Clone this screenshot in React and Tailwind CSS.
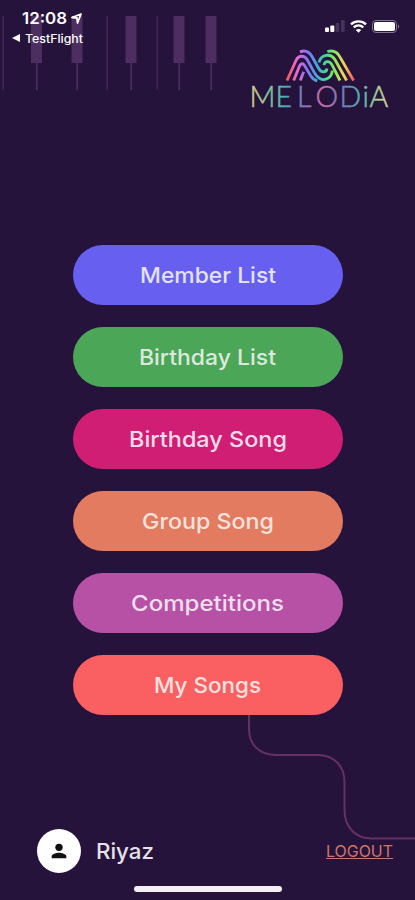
import React from 'react';

const menuItems = [
  { label: 'Member List', color: 'bg-[#665ff0]', text: 'text-[#e3e2f5]', width: 136 },
  { label: 'Birthday List', color: 'bg-[#4ba657]', text: 'text-[#dce8dc]', width: 137 },
  { label: 'Birthday Song', color: 'bg-[#d01e75]', text: 'text-[#f6dce8]', width: 158 },
  { label: 'Group Song', color: 'bg-[#e37b60]', text: 'text-[#f5e2dc]', width: 132 },
  { label: 'Competitions', color: 'bg-[#b651a5]', text: 'text-[#f0deed]', width: 153 },
  { label: 'My Songs', color: 'bg-[#fa6062]', text: 'text-[#fae0df]', width: 107 },
];

// Text set to a fixed advance width
const Label = ({ children, width, size, weight = 500 }) => (
  <svg width={width} height="34" className="block overflow-visible" fill="currentColor">
    <text
      x="0"
      y="25"
      fontFamily="Inter, sans-serif"
      fontSize={size}
      fontWeight={weight}
      textLength={width}
      lengthAdjust="spacingAndGlyphs"
    >
      {children}
    </text>
  </svg>
);

const PianoKeys = () => (
  <svg width="230" height="100" className="absolute top-0 left-0" aria-hidden="true">
    <g fill="#422557">
      {[3, 107, 157].map((x) => (
        <rect key={x} x={x - 0.5} y="16" width="1.5" height="74" />
      ))}
    </g>
    <g fill="#4c2f60">
      {[36.5, 77, 131, 179, 211].map((x) => (
        <g key={x}>
          <rect x={x - 5.5} y="16" width="11" height="47" />
          <rect x={x - 0.5} y="63" width="1.5" height="27" />
        </g>
      ))}
    </g>
  </svg>
);

const StatusBar = () => (
  <div className="relative flex justify-between h-12 pt-[9px] pl-[11px] pr-[15px] text-white">
    <div>
      <div className="flex items-center gap-1 pl-[11px] h-[18px]">
        <svg width="45" height="18" fill="white" className="overflow-visible">
          <text x="0" y="15" fontFamily="Inter, sans-serif" fontSize="16" fontWeight="600" textLength="45" lengthAdjust="spacingAndGlyphs">12:08</text>
        </svg>
        <svg width="11" height="11" viewBox="0 0 11 11" fill="none" stroke="white" strokeWidth="1.8" strokeLinejoin="round">
          <path d="M10 1 L1 4.500 L6 5 L6.500 10 Z" />
        </svg>
      </div>
      <div className="flex items-center gap-1 h-[22px]">
        <svg width="10" height="8" viewBox="0 0 10 8" fill="white">
          <path d="M1 4 L9 0 V8 Z" />
        </svg>
        <svg width="58" height="16" fill="white" className="overflow-visible">
          <text x="0" y="12.5" fontFamily="Inter, sans-serif" fontSize="11.5" fontWeight="500" textLength="58" lengthAdjust="spacingAndGlyphs">TestFlight</text>
        </svg>
      </div>
    </div>
    <div className="flex items-center gap-[5px] h-[34px]">
      <svg width="20" height="12" viewBox="0 0 20 12">
        <rect x="0" y="7.5" width="4" height="4.5" rx="1" fill="white" />
        <rect x="5.3" y="5.5" width="4" height="6.5" rx="1" fill="white" />
        <rect x="10.6" y="3" width="3.7" height="9" rx="1" fill="#46335b" />
        <rect x="16" y="0" width="3.7" height="12" rx="1" fill="#46335b" />
      </svg>
      <svg width="17" height="13" viewBox="0 0 17 13" fill="none" stroke="white" strokeWidth="2.3">
        <path d="M1 4.4 C5.2 0.4 11.8 0.4 16 4.4" />
        <path d="M3.7 7.4 C6.5 4.8 10.5 4.8 13.3 7.4" />
        <path d="M8.5 12.8 L5.8 10 C7.3 8.7 9.7 8.7 11.2 10 Z" fill="white" stroke="none" />
      </svg>
      <svg width="28" height="13" viewBox="0 0 28 13">
        <rect x="0.5" y="0.5" width="24" height="12" rx="3.5" fill="none" stroke="#81768f" />
        <rect x="2" y="2" width="21" height="9" rx="2" fill="white" />
        <path d="M26 4.5 C27.6 5.2 27.6 7.8 26 8.5 Z" fill="#81768f" />
      </svg>
    </div>
  </div>
);

const Logo = () => (
  <svg width="142" height="62" viewBox="250 48 142 62" className="block overflow-visible" aria-label="Melodia">
    <defs>
      <linearGradient id="mark" gradientUnits="userSpaceOnUse" x1="140" y1="0" x2="341" y2="0">
        <stop offset="0" stopColor="#f2595c" />
        <stop offset="0.15" stopColor="#e86bd0" />
        <stop offset="0.3" stopColor="#8c70f0" />
        <stop offset="0.45" stopColor="#43a6df" />
        <stop offset="0.6" stopColor="#43e08a" />
        <stop offset="0.74" stopColor="#9be756" />
        <stop offset="0.86" stopColor="#f4d557" />
        <stop offset="1" stopColor="#f35b65" />
      </linearGradient>
      <linearGradient id="word" gradientUnits="userSpaceOnUse" x1="251" y1="0" x2="390" y2="0">
        <stop offset="0" stopColor="#d7ce8c" />
        <stop offset="0.14" stopColor="#7fc49b" />
        <stop offset="0.25" stopColor="#4aaeb5" />
        <stop offset="0.38" stopColor="#8776b9" />
        <stop offset="0.52" stopColor="#cd70ae" />
        <stop offset="0.65" stopColor="#747bc0" />
        <stop offset="0.8" stopColor="#55b8ad" />
        <stop offset="0.9" stopColor="#a4d39a" />
        <stop offset="1" stopColor="#dcd391" />
      </linearGradient>
    </defs>
    {/* Interleaved stripes of the wave mark */}
    <g transform="translate(240 40.5) scale(0.3333)" fill="none" stroke="url(#mark)" strokeWidth="8.5">
      <path d="M141 120 L168 60 C176 43 194 43 203 60 L224 98 C232 113 246 120 258 116 C270 112 276 104 277 90" />
      <path d="M161 120 L178 78 C183 67 190 67 196 79 L212 106 C217 114 223 119 232 121" />
      <path d="M181 120 L191 94" />
      <path d="M180 34 C196 28 208 34 216 48 L236 84 C243 97 259 98 261 84" />
      <path d="M262 33 C280 28 292 34 300 50 L341 120" />
      <path d="M237 66 C242 42 272 36 285 58 L320 120" />
      <path d="M252 74 C254 60 269 60 276 73 L300 120" />
    </g>
    <text
      x="249.500 275.500 297 315.500 339.500 362.500 369.500"
      y="107"
      fill="url(#word)"
      stroke="url(#word)"
      strokeWidth="0.5"
      fontFamily="Lato, sans-serif"
      fontWeight="300"
      fontSize="28.5"
    >
      MELODiA
    </text>
  </svg>
);

const App = () => {
  return (
    <div className="relative w-[415px] h-[900px] overflow-hidden bg-[#26133b] flex flex-col">
      {/* Background drawings */}
      <PianoKeys />
      <svg width="185" height="140" viewBox="230 700 185 140" className="absolute top-[700px] right-0" fill="none" stroke="#663066" strokeWidth="2">
        <path d="M249 700 V729 C249 745 260 755 276 755 H318 C334 755 344.500 766 344.500 782 V810 C344.500 828 356 838.500 372 838.500 H415" />
      </svg>

      <StatusBar />
      <header className="relative flex justify-end pr-[23px]">
        <Logo />
      </header>

      {/* Main menu */}
      <nav className="relative flex flex-col items-center gap-[22px] mt-[135px]">
        {menuItems.map((item) => (
          <button
            key={item.label}
            className={`flex items-center justify-center w-[270px] h-[60px] rounded-full ${item.color} ${item.text}`}
          >
            <Label width={item.width} size="22">{item.label}</Label>
          </button>
        ))}
      </nav>

      {/* User row */}
      <footer className="relative flex items-center justify-between mt-[114px] pl-[37px] pr-[22px] h-11">
        <div className="flex items-center gap-[15px] text-[#e6e1ea]">
          <div className="flex items-center justify-center size-11 rounded-full bg-white">
            <svg width="22" height="22" viewBox="0 0 24 24" fill="#111111">
              <circle cx="12" cy="8" r="4" />
              <path d="M4 20 V18 C4 15.300 9.300 14 12 14 C14.700 14 20 15.300 20 18 V20 Z" />
            </svg>
          </div>
          <Label width={58} size="22">Riyaz</Label>
        </div>
        <a href="#" className="text-[#cd7668] border-b border-[#cd7668] h-[16px]">
          <svg width="67" height="15" fill="currentColor" className="block overflow-visible">
            <text x="0" y="14" fontFamily="Inter, sans-serif" fontSize="16" textLength="67" lengthAdjust="spacingAndGlyphs">LOGOUT</text>
          </svg>
        </a>
      </footer>
      <div className="absolute bottom-[8px] left-[134px] w-[148px] h-[6px] rounded-full bg-[#f3eff3]" />
    </div>
  );
};

export default App;
